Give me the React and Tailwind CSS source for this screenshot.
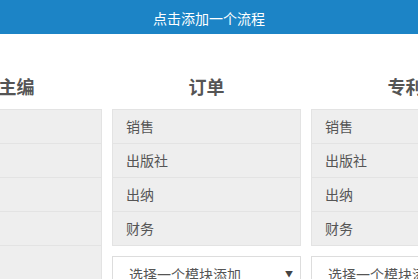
import React from "react";

const columns = [
  { title: "副主编", items: ["销售", "出版社", "出纳", "财务", "审核"] },
  { title: "订单", items: ["销售", "出版社", "出纳", "财务"] },
  { title: "专利", items: ["销售", "出版社", "出纳", "财务"] },
];

function Column({ title, items }) {
  return (
    <div className="w-[189px] shrink-0">
      <h3 className="h-[75px] pt-[40px] text-center text-[18px] leading-[24px] font-bold text-[#555555]">
        {title}
      </h3>
      <div className="border-t border-[#e3e3e3]">
        {items.map((it, i) => (
          <div
            key={i}
            className="h-[34px] border-x border-b border-[#e3e3e3] bg-[#eeeeee] pl-[13px] flex items-center text-[14px] text-[#555555]"
          >
            {it}
          </div>
        ))}
      </div>
      <div className="mt-[10px] h-[36px] border border-[#dddddd] bg-white flex items-center justify-between pl-[16px] pr-[7px] text-[14px] text-[#555555]">
        <span>选择一个模块添加</span>
        <span className="text-[8px] leading-none text-[#444444]">▼</span>
      </div>
    </div>
  );
}

export default function App() {
  return (
    <div className="w-[418px] h-[279px] overflow-hidden bg-white font-['Noto_Sans_CJK_SC',sans-serif]">
      <div className="h-[34px] bg-[#1c84c6] text-white text-[14px] flex items-center justify-center pt-[2px]">
        点击添加一个流程
      </div>
      <div className="flex gap-[10px] ml-[-87px]">
        {columns.map((c, i) => (
          <Column key={i} {...c} />
        ))}
      </div>
    </div>
  );
}
